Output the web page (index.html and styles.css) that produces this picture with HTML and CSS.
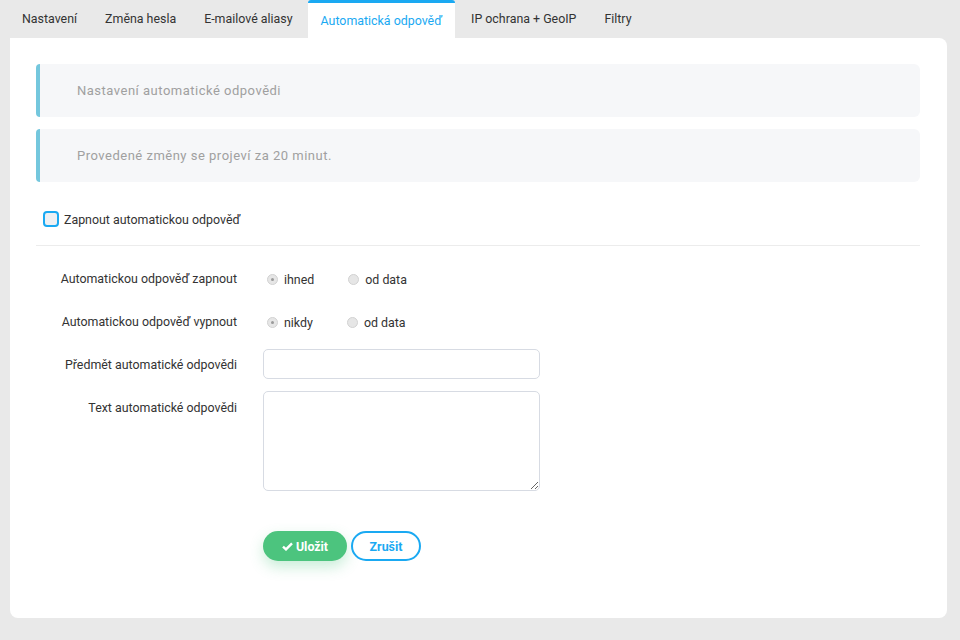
FILE: index.html
```html
<!DOCTYPE html>
<html lang="cs">
<head>
    <meta charset="UTF-8">
    <meta name="viewport" content="width=device-width, initial-scale=1.0">
    <title>Automatická odpověď</title>
    <link rel="stylesheet" href="styles.css">
</head>
<body>
    <!-- Tabs -->
    <div class="tabs">
        <div class="tab">Nastavení</div>
        <div class="tab">Změna hesla</div>
        <div class="tab">E-mailové aliasy</div>
        <div class="tab active">Automatická odpověď</div>
        <div class="tab">IP ochrana + GeoIP</div>
        <div class="tab">Filtry</div>
    </div>

    <div class="panel">
        <div class="alert">Nastavení automatické odpovědi</div>
        <div class="alert">Provedené změny se projeví za 20 minut.</div>

        <label class="check-row">
            <span class="checkbox"></span>
            Zapnout automatickou odpověď
        </label>

        <div class="separator"></div>

        <div class="form">
            <div class="form-row">
                <div class="form-label">Automatickou odpověď zapnout</div>
                <div class="radios">
                    <span class="radio checked"></span><span class="radio-text">ihned</span>
                    <span class="radio"></span><span class="radio-text">od data</span>
                </div>
            </div>
            <div class="form-row">
                <div class="form-label">Automatickou odpověď vypnout</div>
                <div class="radios">
                    <span class="radio checked"></span><span class="radio-text">nikdy</span>
                    <span class="radio"></span><span class="radio-text">od data</span>
                </div>
            </div>
            <div class="form-row">
                <div class="form-label">Předmět automatické odpovědi</div>
                <input class="input" type="text">
            </div>
            <div class="form-row">
                <div class="form-label">Text automatické odpovědi</div>
                <textarea class="textarea"></textarea>
            </div>

            <div class="buttons">
                <button class="btn btn-save">
                    <svg width="11" height="9" viewBox="0 0 11 9"><path d="M1 4.6 L4 7.4 L10 1.4" fill="none" stroke="#fff" stroke-width="2.4"/></svg>
                    Uložit
                </button>
                <button class="btn btn-cancel">Zrušit</button>
            </div>
        </div>
    </div>
</body>
</html>
```

FILE: styles.css
```css
body {
    margin: 0;
    padding: 0 13px 23px 10px;
    background: #e9e9e9;
    font-family: Roboto, 'Liberation Sans', sans-serif;
    font-size: 12.4px;
    color: #333;
}

.tabs {
    display: flex;
    height: 38px;
}

.tab {
    padding: 0 14px;
    line-height: 38px;
    color: #333;
    white-space: nowrap;
}

.tab:first-child {
    padding-left: 12px;
}

.tab.active {
    background: #fff;
    color: #1aa9f2;
    border-top: 3px solid #1aa9f2;
    border-radius: 3px 3px 0 0;
    line-height: 35px;
    padding: 0 13px;
    margin: 0 2px 0 1px;
}

.panel {
    background: #fff;
    border-radius: 0 8px 8px 8px;
    padding: 26px 27px 57px 26px;
}

.alert {
    background: #f6f7f9;
    border-left: 4px solid #74c7dd;
    border-radius: 4px 6px 6px 4px;
    height: 53px;
    line-height: 54px;
    padding-left: 37px;
    margin-bottom: 12px;
    color: #a0a0a0;
    font-size: 13px;
    font-weight: 400;
    letter-spacing: 0.5px;
}

.check-row {
    display: flex;
    align-items: center;
    margin: 27px 0 0 7px;
    height: 20px;
    color: #333;
}

.checkbox {
    width: 12px;
    height: 12px;
    border: 2px solid #1aa9f2;
    border-radius: 4px;
    background: #eef0f3;
    margin-right: 5px;
}

.separator {
    height: 1px;
    background: #ececec;
    margin-top: 16px;
}

.form {
    padding-top: 23px;
}

.form-row {
    display: flex;
    align-items: flex-start;
    margin-bottom: 18px;
}

.form-label {
    width: 201px;
    text-align: right;
    padding-right: 26px;
    line-height: 20px;
    color: #333;
}

.form-row:nth-child(1),
.form-row:nth-child(2) {
    margin-bottom: 23px;
}

.form-row:nth-child(4) .form-label {
    padding-top: 1px;
}

.radios {
    display: flex;
    align-items: center;
    height: 20px;
    padding-left: 4px;
}

.radio {
    width: 11px;
    height: 11px;
    border-radius: 50%;
    background: #e6e6e6;
    border: 1px solid #d2d2d2;
    box-sizing: border-box;
    position: relative;
}

.radio.checked::after {
    content: '';
    position: absolute;
    left: 3px;
    top: 3px;
    width: 3px;
    height: 3px;
    border-radius: 50%;
    background: #9a9a9a;
}

.radio-text {
    margin: 0 34px 0 6px;
    color: #333;
}

.input {
    width: 277px;
    height: 30px;
    box-sizing: border-box;
    border: 1px solid #d7dbe3;
    border-radius: 5px;
    margin-top: -6px;
}

.textarea {
    width: 277px;
    height: 100px;
    box-sizing: border-box;
    border: 1px solid #d7dbe3;
    border-radius: 5px;
    margin: 0;
    margin-top: -6px;
}

.buttons {
    display: flex;
    gap: 4px;
    margin: 40px 0 0 227px;
}

.btn {
    height: 30px;
    border-radius: 15px;
    font-family: Roboto, 'Liberation Sans', sans-serif;
    font-size: 12.4px;
    font-weight: 700;
    cursor: pointer;
}

.btn-save {
    width: 84px;
    background: #4cc47e;
    color: #fff;
    border: none;
    box-shadow: 0 6px 14px rgba(76, 196, 126, 0.3);
    display: flex;
    align-items: center;
    justify-content: center;
    gap: 3px;
}

.btn-cancel {
    width: 70px;
    background: #fff;
    color: #1aa9f2;
    border: 2px solid #1aa9f2;
}
```
